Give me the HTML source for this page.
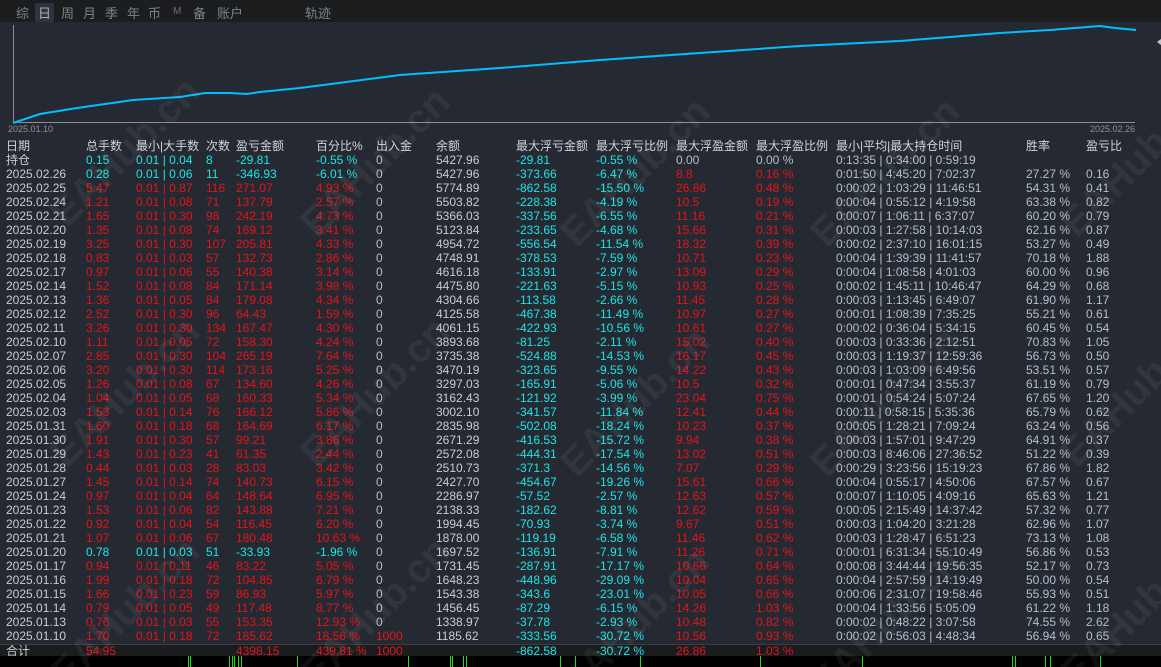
<!DOCTYPE html>
<html style="overflow:hidden;width:1161px;height:667px"><head><meta charset="utf-8"><style>
*{margin:0;padding:0;box-sizing:border-box}
body{width:1161px;height:667px;background:#252a32;font-family:"Liberation Sans","Noto Sans CJK SC",sans-serif;overflow:hidden;position:relative;color:#c3c8d0}
.top{position:absolute;left:0;top:0;width:1161px;height:22px;background:#1c1d1f}
.tab{position:absolute;top:3px;font-size:13px;color:#7c828b}
.sel{background:#2d3440;color:#aab0b8;padding:0 3px;border-radius:2px;margin-left:-3px}
.wmc{position:absolute;left:0;top:0;width:1161px;height:667px;overflow:hidden;pointer-events:none}
.wm{position:absolute;font-size:40px;font-weight:bold;color:rgba(255,255,255,0.06);transform:rotate(-45deg);white-space:nowrap}
table{position:absolute;left:0;top:139px;border-collapse:collapse;font-size:12px}
td{height:14px;line-height:14px;padding:0;white-space:nowrap;vertical-align:middle}
.h td{color:#d0d4da}
.r{color:#e3141a}.c{color:#1ee3e6}.g{color:#b6bfcc}.w{color:#c8ccd3}
.tot{position:absolute;left:0;top:644px;width:1161px;height:12px;background:#1b1c1e;border-top:1px solid #3a3f46}
.bot{position:absolute;left:0;top:656px;width:1161px;height:11px;background:#000;overflow:hidden}
.bot i{position:absolute;top:0;width:1px;height:11px;background:#1adc1a}
</style></head><body>
<div class="top">
<span class="tab" style="left:16px">综</span>
<span class="tab sel" style="left:38px">日</span>
<span class="tab" style="left:61px">周</span>
<span class="tab" style="left:83px">月</span>
<span class="tab" style="left:105px">季</span>
<span class="tab" style="left:127px">年</span>
<span class="tab" style="left:148px">币</span>
<span class="tab" style="left:173px;font-size:10px;top:6px;color:#6a6f76">M</span>
<span class="tab" style="left:193px">备</span>
<span class="tab" style="left:217px">账户</span>
<span class="tab" style="left:305px">轨迹</span>
</div>
<svg style="position:absolute;left:0;top:22px" width="1161" height="115">
<line x1="13.5" y1="3" x2="13.5" y2="101" stroke="#8a8f96" stroke-width="1"/>
<line x1="13" y1="100.5" x2="1135" y2="100.5" stroke="#8a8f96" stroke-width="1"/>
<polyline fill="none" stroke="#00bfff" stroke-width="2" points="13,101 40,92 77,86 133,78 180,75 205,71 230,71 247,72 260,70 300,66 400,53 500,46 600,38 700,31 800,24 900,19 1000,11 1050,8 1100,4 1115,6 1136,8"/>
<polygon points="1157,20 1161,17 1161,23" fill="#c0c4ca"/>
<text x="8" y="110" font-size="9" fill="#8c929a" font-family="Liberation Sans">2025.01.10</text>
<text x="1090" y="110" font-size="9" fill="#8c929a" font-family="Liberation Sans">2025.02.26</text>
</svg>
<table>
<colgroup><col style="width:86px"><col style="width:50px"><col style="width:70px"><col style="width:30px"><col style="width:80px"><col style="width:60px"><col style="width:60px"><col style="width:80px"><col style="width:80px"><col style="width:80px"><col style="width:80px"><col style="width:80px"><col style="width:190px"><col style="width:60px"><col style="width:75px"></colgroup>
<tr class="h"><td style="padding-left:6px">日期</td><td>总手数</td><td>最小|大手数</td><td>次数</td><td>盈亏金额</td><td>百分比%</td><td>出入金</td><td>余额</td><td>最大浮亏金额</td><td>最大浮亏比例</td><td>最大浮盈金额</td><td>最大浮盈比例</td><td>最小|平均|最大持仓时间</td><td>胜率</td><td>盈亏比</td></tr>
<tr><td class="w" style="padding-left:6px">持仓</td><td class="c">0.15</td><td class="c">0.01 | 0.04</td><td class="c">8</td><td class="c">-29.81</td><td class="c">-0.55 %</td><td class="g">0</td><td class="w">5427.96</td><td class="c">-29.81</td><td class="c">-0.55 %</td><td class="g">0.00</td><td class="g">0.00 %</td><td class="g">0:13:35 | 0:34:00 | 0:59:19</td><td></td><td></td></tr>
<tr><td class="w" style="padding-left:6px">2025.02.26</td><td class="c">0.28</td><td class="c">0.01 | 0.06</td><td class="c">11</td><td class="c">-346.93</td><td class="c">-6.01 %</td><td class="g">0</td><td class="w">5427.96</td><td class="c">-373.66</td><td class="c">-6.47 %</td><td class="r">8.8</td><td class="r">0.16 %</td><td class="g">0:01:50 | 4:45:20 | 7:02:37</td><td class="g">27.27 %</td><td class="g">0.16</td></tr>
<tr><td class="w" style="padding-left:6px">2025.02.25</td><td class="r">5.47</td><td class="r">0.01 | 0.87</td><td class="r">116</td><td class="r">271.07</td><td class="r">4.93 %</td><td class="g">0</td><td class="w">5774.89</td><td class="c">-862.58</td><td class="c">-15.50 %</td><td class="r">26.86</td><td class="r">0.48 %</td><td class="g">0:00:02 | 1:03:29 | 11:46:51</td><td class="g">54.31 %</td><td class="g">0.41</td></tr>
<tr><td class="w" style="padding-left:6px">2025.02.24</td><td class="r">1.21</td><td class="r">0.01 | 0.08</td><td class="r">71</td><td class="r">137.79</td><td class="r">2.57 %</td><td class="g">0</td><td class="w">5503.82</td><td class="c">-228.38</td><td class="c">-4.19 %</td><td class="r">10.5</td><td class="r">0.19 %</td><td class="g">0:00:04 | 0:55:12 | 4:19:58</td><td class="g">63.38 %</td><td class="g">0.82</td></tr>
<tr><td class="w" style="padding-left:6px">2025.02.21</td><td class="r">1.65</td><td class="r">0.01 | 0.30</td><td class="r">98</td><td class="r">242.19</td><td class="r">4.73 %</td><td class="g">0</td><td class="w">5366.03</td><td class="c">-337.56</td><td class="c">-6.55 %</td><td class="r">11.16</td><td class="r">0.21 %</td><td class="g">0:00:07 | 1:06:11 | 6:37:07</td><td class="g">60.20 %</td><td class="g">0.79</td></tr>
<tr><td class="w" style="padding-left:6px">2025.02.20</td><td class="r">1.35</td><td class="r">0.01 | 0.08</td><td class="r">74</td><td class="r">169.12</td><td class="r">3.41 %</td><td class="g">0</td><td class="w">5123.84</td><td class="c">-233.65</td><td class="c">-4.68 %</td><td class="r">15.66</td><td class="r">0.31 %</td><td class="g">0:00:03 | 1:27:58 | 10:14:03</td><td class="g">62.16 %</td><td class="g">0.87</td></tr>
<tr><td class="w" style="padding-left:6px">2025.02.19</td><td class="r">3.25</td><td class="r">0.01 | 0.30</td><td class="r">107</td><td class="r">205.81</td><td class="r">4.33 %</td><td class="g">0</td><td class="w">4954.72</td><td class="c">-556.54</td><td class="c">-11.54 %</td><td class="r">18.32</td><td class="r">0.39 %</td><td class="g">0:00:02 | 2:37:10 | 16:01:15</td><td class="g">53.27 %</td><td class="g">0.49</td></tr>
<tr><td class="w" style="padding-left:6px">2025.02.18</td><td class="r">0.83</td><td class="r">0.01 | 0.03</td><td class="r">57</td><td class="r">132.73</td><td class="r">2.86 %</td><td class="g">0</td><td class="w">4748.91</td><td class="c">-378.53</td><td class="c">-7.59 %</td><td class="r">10.71</td><td class="r">0.23 %</td><td class="g">0:00:04 | 1:39:39 | 11:41:57</td><td class="g">70.18 %</td><td class="g">1.88</td></tr>
<tr><td class="w" style="padding-left:6px">2025.02.17</td><td class="r">0.97</td><td class="r">0.01 | 0.06</td><td class="r">55</td><td class="r">140.38</td><td class="r">3.14 %</td><td class="g">0</td><td class="w">4616.18</td><td class="c">-133.91</td><td class="c">-2.97 %</td><td class="r">13.09</td><td class="r">0.29 %</td><td class="g">0:00:04 | 1:08:58 | 4:01:03</td><td class="g">60.00 %</td><td class="g">0.96</td></tr>
<tr><td class="w" style="padding-left:6px">2025.02.14</td><td class="r">1.52</td><td class="r">0.01 | 0.08</td><td class="r">84</td><td class="r">171.14</td><td class="r">3.98 %</td><td class="g">0</td><td class="w">4475.80</td><td class="c">-221.63</td><td class="c">-5.15 %</td><td class="r">10.93</td><td class="r">0.25 %</td><td class="g">0:00:02 | 1:45:11 | 10:46:47</td><td class="g">64.29 %</td><td class="g">0.68</td></tr>
<tr><td class="w" style="padding-left:6px">2025.02.13</td><td class="r">1.36</td><td class="r">0.01 | 0.05</td><td class="r">84</td><td class="r">179.08</td><td class="r">4.34 %</td><td class="g">0</td><td class="w">4304.66</td><td class="c">-113.58</td><td class="c">-2.66 %</td><td class="r">11.45</td><td class="r">0.28 %</td><td class="g">0:00:03 | 1:13:45 | 6:49:07</td><td class="g">61.90 %</td><td class="g">1.17</td></tr>
<tr><td class="w" style="padding-left:6px">2025.02.12</td><td class="r">2.52</td><td class="r">0.01 | 0.30</td><td class="r">96</td><td class="r">64.43</td><td class="r">1.59 %</td><td class="g">0</td><td class="w">4125.58</td><td class="c">-467.38</td><td class="c">-11.49 %</td><td class="r">10.97</td><td class="r">0.27 %</td><td class="g">0:00:01 | 1:08:39 | 7:35:25</td><td class="g">55.21 %</td><td class="g">0.61</td></tr>
<tr><td class="w" style="padding-left:6px">2025.02.11</td><td class="r">3.26</td><td class="r">0.01 | 0.30</td><td class="r">134</td><td class="r">167.47</td><td class="r">4.30 %</td><td class="g">0</td><td class="w">4061.15</td><td class="c">-422.93</td><td class="c">-10.56 %</td><td class="r">10.61</td><td class="r">0.27 %</td><td class="g">0:00:02 | 0:36:04 | 5:34:15</td><td class="g">60.45 %</td><td class="g">0.54</td></tr>
<tr><td class="w" style="padding-left:6px">2025.02.10</td><td class="r">1.11</td><td class="r">0.01 | 0.05</td><td class="r">72</td><td class="r">158.30</td><td class="r">4.24 %</td><td class="g">0</td><td class="w">3893.68</td><td class="c">-81.25</td><td class="c">-2.11 %</td><td class="r">15.02</td><td class="r">0.40 %</td><td class="g">0:00:03 | 0:33:36 | 2:12:51</td><td class="g">70.83 %</td><td class="g">1.05</td></tr>
<tr><td class="w" style="padding-left:6px">2025.02.07</td><td class="r">2.85</td><td class="r">0.01 | 0.30</td><td class="r">104</td><td class="r">265.19</td><td class="r">7.64 %</td><td class="g">0</td><td class="w">3735.38</td><td class="c">-524.88</td><td class="c">-14.53 %</td><td class="r">16.17</td><td class="r">0.45 %</td><td class="g">0:00:03 | 1:19:37 | 12:59:36</td><td class="g">56.73 %</td><td class="g">0.50</td></tr>
<tr><td class="w" style="padding-left:6px">2025.02.06</td><td class="r">3.20</td><td class="r">0.01 | 0.30</td><td class="r">114</td><td class="r">173.16</td><td class="r">5.25 %</td><td class="g">0</td><td class="w">3470.19</td><td class="c">-323.65</td><td class="c">-9.55 %</td><td class="r">14.22</td><td class="r">0.43 %</td><td class="g">0:00:03 | 1:03:09 | 6:49:56</td><td class="g">53.51 %</td><td class="g">0.57</td></tr>
<tr><td class="w" style="padding-left:6px">2025.02.05</td><td class="r">1.26</td><td class="r">0.01 | 0.08</td><td class="r">67</td><td class="r">134.60</td><td class="r">4.26 %</td><td class="g">0</td><td class="w">3297.03</td><td class="c">-165.91</td><td class="c">-5.06 %</td><td class="r">10.5</td><td class="r">0.32 %</td><td class="g">0:00:01 | 0:47:34 | 3:55:37</td><td class="g">61.19 %</td><td class="g">0.79</td></tr>
<tr><td class="w" style="padding-left:6px">2025.02.04</td><td class="r">1.04</td><td class="r">0.01 | 0.05</td><td class="r">68</td><td class="r">160.33</td><td class="r">5.34 %</td><td class="g">0</td><td class="w">3162.43</td><td class="c">-121.92</td><td class="c">-3.99 %</td><td class="r">23.04</td><td class="r">0.75 %</td><td class="g">0:00:01 | 0:54:24 | 5:07:24</td><td class="g">67.65 %</td><td class="g">1.20</td></tr>
<tr><td class="w" style="padding-left:6px">2025.02.03</td><td class="r">1.53</td><td class="r">0.01 | 0.14</td><td class="r">76</td><td class="r">166.12</td><td class="r">5.86 %</td><td class="g">0</td><td class="w">3002.10</td><td class="c">-341.57</td><td class="c">-11.84 %</td><td class="r">12.41</td><td class="r">0.44 %</td><td class="g">0:00:11 | 0:58:15 | 5:35:36</td><td class="g">65.79 %</td><td class="g">0.62</td></tr>
<tr><td class="w" style="padding-left:6px">2025.01.31</td><td class="r">1.60</td><td class="r">0.01 | 0.18</td><td class="r">68</td><td class="r">164.69</td><td class="r">6.17 %</td><td class="g">0</td><td class="w">2835.98</td><td class="c">-502.08</td><td class="c">-18.24 %</td><td class="r">10.23</td><td class="r">0.37 %</td><td class="g">0:00:05 | 1:28:21 | 7:09:24</td><td class="g">63.24 %</td><td class="g">0.56</td></tr>
<tr><td class="w" style="padding-left:6px">2025.01.30</td><td class="r">1.91</td><td class="r">0.01 | 0.30</td><td class="r">57</td><td class="r">99.21</td><td class="r">3.86 %</td><td class="g">0</td><td class="w">2671.29</td><td class="c">-416.53</td><td class="c">-15.72 %</td><td class="r">9.94</td><td class="r">0.38 %</td><td class="g">0:00:03 | 1:57:01 | 9:47:29</td><td class="g">64.91 %</td><td class="g">0.37</td></tr>
<tr><td class="w" style="padding-left:6px">2025.01.29</td><td class="r">1.43</td><td class="r">0.01 | 0.23</td><td class="r">41</td><td class="r">61.35</td><td class="r">2.44 %</td><td class="g">0</td><td class="w">2572.08</td><td class="c">-444.31</td><td class="c">-17.54 %</td><td class="r">13.02</td><td class="r">0.51 %</td><td class="g">0:00:03 | 8:46:06 | 27:36:52</td><td class="g">51.22 %</td><td class="g">0.39</td></tr>
<tr><td class="w" style="padding-left:6px">2025.01.28</td><td class="r">0.44</td><td class="r">0.01 | 0.03</td><td class="r">28</td><td class="r">83.03</td><td class="r">3.42 %</td><td class="g">0</td><td class="w">2510.73</td><td class="c">-371.3</td><td class="c">-14.56 %</td><td class="r">7.07</td><td class="r">0.29 %</td><td class="g">0:00:29 | 3:23:56 | 15:19:23</td><td class="g">67.86 %</td><td class="g">1.82</td></tr>
<tr><td class="w" style="padding-left:6px">2025.01.27</td><td class="r">1.45</td><td class="r">0.01 | 0.14</td><td class="r">74</td><td class="r">140.73</td><td class="r">6.15 %</td><td class="g">0</td><td class="w">2427.70</td><td class="c">-454.67</td><td class="c">-19.26 %</td><td class="r">15.61</td><td class="r">0.66 %</td><td class="g">0:00:04 | 0:55:17 | 4:50:06</td><td class="g">67.57 %</td><td class="g">0.67</td></tr>
<tr><td class="w" style="padding-left:6px">2025.01.24</td><td class="r">0.97</td><td class="r">0.01 | 0.04</td><td class="r">64</td><td class="r">148.64</td><td class="r">6.95 %</td><td class="g">0</td><td class="w">2286.97</td><td class="c">-57.52</td><td class="c">-2.57 %</td><td class="r">12.63</td><td class="r">0.57 %</td><td class="g">0:00:07 | 1:10:05 | 4:09:16</td><td class="g">65.63 %</td><td class="g">1.21</td></tr>
<tr><td class="w" style="padding-left:6px">2025.01.23</td><td class="r">1.53</td><td class="r">0.01 | 0.06</td><td class="r">82</td><td class="r">143.88</td><td class="r">7.21 %</td><td class="g">0</td><td class="w">2138.33</td><td class="c">-182.62</td><td class="c">-8.81 %</td><td class="r">12.62</td><td class="r">0.59 %</td><td class="g">0:00:05 | 2:15:49 | 14:37:42</td><td class="g">57.32 %</td><td class="g">0.77</td></tr>
<tr><td class="w" style="padding-left:6px">2025.01.22</td><td class="r">0.92</td><td class="r">0.01 | 0.04</td><td class="r">54</td><td class="r">116.45</td><td class="r">6.20 %</td><td class="g">0</td><td class="w">1994.45</td><td class="c">-70.93</td><td class="c">-3.74 %</td><td class="r">9.67</td><td class="r">0.51 %</td><td class="g">0:00:03 | 1:04:20 | 3:21:28</td><td class="g">62.96 %</td><td class="g">1.07</td></tr>
<tr><td class="w" style="padding-left:6px">2025.01.21</td><td class="r">1.07</td><td class="r">0.01 | 0.06</td><td class="r">67</td><td class="r">180.48</td><td class="r">10.63 %</td><td class="g">0</td><td class="w">1878.00</td><td class="c">-119.19</td><td class="c">-6.58 %</td><td class="r">11.46</td><td class="r">0.62 %</td><td class="g">0:00:03 | 1:28:47 | 6:51:23</td><td class="g">73.13 %</td><td class="g">1.08</td></tr>
<tr><td class="w" style="padding-left:6px">2025.01.20</td><td class="c">0.78</td><td class="c">0.01 | 0.03</td><td class="c">51</td><td class="c">-33.93</td><td class="c">-1.96 %</td><td class="g">0</td><td class="w">1697.52</td><td class="c">-136.91</td><td class="c">-7.91 %</td><td class="r">11.26</td><td class="r">0.71 %</td><td class="g">0:00:01 | 6:31:34 | 55:10:49</td><td class="g">56.86 %</td><td class="g">0.53</td></tr>
<tr><td class="w" style="padding-left:6px">2025.01.17</td><td class="r">0.94</td><td class="r">0.01 | 0.11</td><td class="r">46</td><td class="r">83.22</td><td class="r">5.05 %</td><td class="g">0</td><td class="w">1731.45</td><td class="c">-287.91</td><td class="c">-17.17 %</td><td class="r">10.66</td><td class="r">0.64 %</td><td class="g">0:00:08 | 3:44:44 | 19:56:35</td><td class="g">52.17 %</td><td class="g">0.73</td></tr>
<tr><td class="w" style="padding-left:6px">2025.01.16</td><td class="r">1.99</td><td class="r">0.01 | 0.18</td><td class="r">72</td><td class="r">104.85</td><td class="r">6.79 %</td><td class="g">0</td><td class="w">1648.23</td><td class="c">-448.96</td><td class="c">-29.09 %</td><td class="r">10.04</td><td class="r">0.65 %</td><td class="g">0:00:04 | 2:57:59 | 14:19:49</td><td class="g">50.00 %</td><td class="g">0.54</td></tr>
<tr><td class="w" style="padding-left:6px">2025.01.15</td><td class="r">1.66</td><td class="r">0.01 | 0.23</td><td class="r">59</td><td class="r">86.93</td><td class="r">5.97 %</td><td class="g">0</td><td class="w">1543.38</td><td class="c">-343.6</td><td class="c">-23.01 %</td><td class="r">10.05</td><td class="r">0.66 %</td><td class="g">0:00:06 | 2:31:07 | 19:58:46</td><td class="g">55.93 %</td><td class="g">0.51</td></tr>
<tr><td class="w" style="padding-left:6px">2025.01.14</td><td class="r">0.79</td><td class="r">0.01 | 0.05</td><td class="r">49</td><td class="r">117.48</td><td class="r">8.77 %</td><td class="g">0</td><td class="w">1456.45</td><td class="c">-87.29</td><td class="c">-6.15 %</td><td class="r">14.26</td><td class="r">1.03 %</td><td class="g">0:00:04 | 1:33:56 | 5:05:09</td><td class="g">61.22 %</td><td class="g">1.18</td></tr>
<tr><td class="w" style="padding-left:6px">2025.01.13</td><td class="r">0.76</td><td class="r">0.01 | 0.03</td><td class="r">55</td><td class="r">153.35</td><td class="r">12.93 %</td><td class="g">0</td><td class="w">1338.97</td><td class="c">-37.78</td><td class="c">-2.93 %</td><td class="r">10.48</td><td class="r">0.82 %</td><td class="g">0:00:02 | 0:48:22 | 3:07:58</td><td class="g">74.55 %</td><td class="g">2.62</td></tr>
<tr><td class="w" style="padding-left:6px">2025.01.10</td><td class="r">1.70</td><td class="r">0.01 | 0.18</td><td class="r">72</td><td class="r">185.62</td><td class="r">18.56 %</td><td class="r">1000</td><td class="w">1185.62</td><td class="c">-333.56</td><td class="c">-30.72 %</td><td class="r">10.56</td><td class="r">0.93 %</td><td class="g">0:00:02 | 0:56:03 | 4:48:34</td><td class="g">56.94 %</td><td class="g">0.65</td></tr>
</table>
<div class="tot"></div>
<table style="top:644px">
<colgroup><col style="width:86px"><col style="width:50px"><col style="width:70px"><col style="width:30px"><col style="width:80px"><col style="width:60px"><col style="width:60px"><col style="width:80px"><col style="width:80px"><col style="width:80px"><col style="width:80px"><col style="width:80px"></colgroup>
<tr><td class="w" style="padding-left:6px;height:13px">合计</td><td class="r">54.95</td><td></td><td></td><td class="r">4398.15</td><td class="r">439.81 %</td><td class="r">1000</td><td></td><td class="c">-862.58</td><td class="c">-30.72 %</td><td class="r">26.86</td><td class="r">1.03 %</td></tr>
</table>
<div class="bot">
<i style="left:188px"></i><i style="left:190px"></i><i style="left:229px"></i><i style="left:232px"></i><i style="left:234px"></i><i style="left:238px"></i><i style="left:241px"></i><i style="left:297px"></i><i style="left:408px"></i><i style="left:450px"></i><i style="left:452px"></i><i style="left:463px"></i><i style="left:466px"></i><i style="left:560px"></i><i style="left:575px"></i><i style="left:640px"></i><i style="left:760px"></i><i style="left:862px"></i><i style="left:1012px"></i><i style="left:1015px"></i><i style="left:1045px"></i><i style="left:1050px"></i><i style="left:1100px"></i>
</div>
<div class="wmc">
<div class="wm" style="left:30px;top:130px">EAHub.cn</div>
<div class="wm" style="left:280px;top:140px">EAHub.cn</div>
<div class="wm" style="left:540px;top:150px">EAHub.cn</div>
<div class="wm" style="left:790px;top:150px">EAHub.cn</div>
<div class="wm" style="left:1040px;top:140px">EAHub.cn</div>
<div class="wm" style="left:30px;top:370px">EAHub.cn</div>
<div class="wm" style="left:280px;top:370px">EAHub.cn</div>
<div class="wm" style="left:540px;top:380px">EAHub.cn</div>
<div class="wm" style="left:790px;top:380px">EAHub.cn</div>
<div class="wm" style="left:1040px;top:370px">EAHub.cn</div>
<div class="wm" style="left:30px;top:590px">EAHub.cn</div>
<div class="wm" style="left:280px;top:590px">EAHub.cn</div>
<div class="wm" style="left:540px;top:600px">EAHub.cn</div>
<div class="wm" style="left:790px;top:600px">EAHub.cn</div>
<div class="wm" style="left:1040px;top:590px">EAHub.cn</div>
</div>
</body></html>
